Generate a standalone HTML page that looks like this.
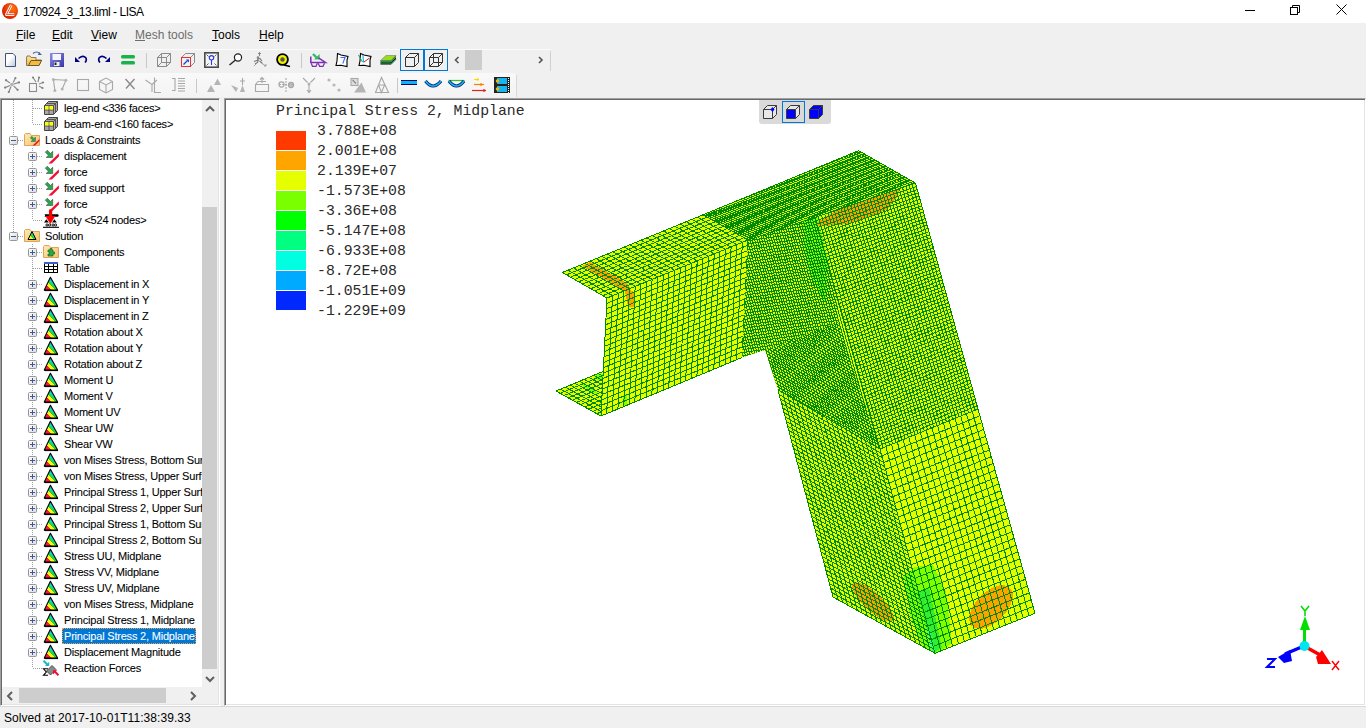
<!DOCTYPE html>
<html><head><meta charset="utf-8">
<style>
*{margin:0;padding:0;box-sizing:border-box}
html,body{width:1366px;height:728px;overflow:hidden;background:#f0f0f0;font-family:"Liberation Sans",sans-serif;color:#000}
.a{position:absolute}
#title{left:0;top:0;width:1366px;height:23px;background:#fff}
#title .t{left:23px;top:5px;font-size:12px;letter-spacing:-0.47px;white-space:nowrap}
#menu{left:0;top:23px;width:1366px;height:24px;background:#f0f0f0}
#menu span{position:absolute;top:5px;font-size:12px;white-space:nowrap;line-height:14px}
#menu u{text-decoration:underline;text-decoration-thickness:1px;text-underline-offset:1px}
#tree{left:0;top:98px;width:220px;height:608px;background:#fff;border-top:1px solid #a0a0a0;border-left:1px solid #a0a0a0;border-right:1px solid #fff;border-bottom:1px solid #fff;box-shadow:inset 1px 1px 0 #696969,inset -1px -1px 0 #e3e3e3}
.row{height:16px;font-size:11px;line-height:16px;white-space:nowrap;letter-spacing:-0.2px;-webkit-text-stroke:0.08px currentColor}
.sel{background:#0078d7;outline:1px dotted #ff9b2a;outline-offset:-1px}
.dv{position:absolute;width:1px;background:repeating-linear-gradient(to bottom,#a0a0a0 0 1px,transparent 1px 2px)}
.dh{position:absolute;height:1px;background:repeating-linear-gradient(to right,#a0a0a0 0 1px,transparent 1px 2px)}
#view{left:224px;top:98px;width:1142px;height:608px;background:#fff;border-top:1px solid #a0a0a0;border-left:1px solid #a0a0a0;border-right:1px solid #fff;border-bottom:1px solid #fff;box-shadow:inset 1px 1px 0 #696969,inset -1px -1px 0 #e3e3e3}
#status{left:0;top:706px;width:1366px;height:22px;background:#f0f0f0;border-top:1px solid #d9d9d9}
#status .t{left:4px;top:4px;font-size:12px;white-space:nowrap;letter-spacing:0.07px}
.leg{position:absolute;font-family:"Liberation Mono",monospace;font-size:14.8px;white-space:pre;line-height:16px;color:#2a2a2a}
.sb{position:absolute;background:#f0f0f0}
.th{position:absolute;background:#cdcdcd}
</style></head><body>
<svg width="0" height="0" style="position:absolute">
<defs>
<linearGradient id="gexp" x1="0" y1="0" x2="1" y2="1"><stop offset="0" stop-color="#fff"/><stop offset="1" stop-color="#d8d8d8"/></linearGradient>
<linearGradient id="gfold" x1="0" y1="0" x2="1" y2="1"><stop offset="0" stop-color="#fce9b4"/><stop offset="1" stop-color="#f5c36b"/></linearGradient>
<linearGradient id="grain" gradientUnits="userSpaceOnUse" x1="0" y1="16" x2="16" y2="0"><stop offset=".32" stop-color="#ee1a44"/><stop offset=".32" stop-color="#ffee00"/><stop offset=".46" stop-color="#ffff00"/><stop offset=".46" stop-color="#22cc44"/><stop offset=".54" stop-color="#22dd44"/><stop offset=".54" stop-color="#11ccdd"/></linearGradient>
<symbol id="expp" viewBox="0 0 9 9"><rect x=".5" y=".5" width="8" height="8" rx="1" fill="url(#gexp)" stroke="#969696"/><path d="M2 4.5H7M4.5 2V7" stroke="#3c5aa0"/></symbol>
<symbol id="expm" viewBox="0 0 9 9"><rect x=".5" y=".5" width="8" height="8" rx="1" fill="url(#gexp)" stroke="#969696"/><path d="M2 4.5H7" stroke="#3c5aa0"/></symbol>
<symbol id="icube" viewBox="0 0 16 16"><path d="M1.5 5.5L5.5 1.5H14.5V10.5L10.5 14.5H1.5Z" fill="#a8a8a8" stroke="#444"/><path d="M1.5 5.5H10.5V14.5M10.5 5.5L14.5 1.5M6 5.5V14.5M1.5 10H10.5M3.5 3.5H12.5M12.5 3.5V12.5" stroke="#555" fill="none"/><rect x="2" y="6" width="3.5" height="3.5" fill="#ffff00"/><rect x="6.5" y="6" width="3.5" height="3.5" fill="#ffff00"/></symbol>
<symbol id="iload" viewBox="0 0 16 16" overflow="visible"><path d="M2.3 4.2L4.3 2.2L7.5 5.5L9.7 3.3V9.5H3.2L5.5 7.3Z" fill="#1fab45" stroke="#555" stroke-width=".7"/><path d="M5.4 15.6H8.9L15.9 8.6V5.3Z" fill="#ee1133"/></symbol>
<symbol id="ifload" viewBox="0 0 16 16"><path d="M.5 2.5V13.5H15.5V3.5H7.5L6 1.5H1.5Z" fill="url(#gfold)" stroke="#dfa45c"/><path d="M6.3 5.8L7.8 4.3L10 6.5L11.5 5V9.5H7L8.5 8Z" fill="#1fab45" stroke="#555" stroke-width=".5"/><path d="M8.5 13.5H11L15.5 9V7Z" fill="#ee1133"/></symbol>
<symbol id="iroty" viewBox="0 0 16 16" overflow="visible"><path d="M1.5 2.2H15L15.8 3.4L15 4.7H1.5L2.2 3.4Z" fill="#000"/><path d="M3.4 7.2L5.8 10.6H1L3.4 7.2ZM11.4 7.2L13.8 10.6H9L11.4 7.2Z" fill="#000"/><g fill="none" stroke="#000" stroke-width=".9"><circle cx="4" cy="13" r="1.1"/><circle cx="6.6" cy="13" r="1.1"/><circle cx="10" cy="13" r="1.1"/><circle cx="12.6" cy="13" r="1.1"/></g><path d="M0 15.3H16" stroke="#000" stroke-width="1.1"/><path d="M7.6 -2.5V6" stroke="#ff0000" stroke-width="3.2"/><path d="M2.4 4H12.3L7.4 12Z" fill="#ff0000"/></symbol>
<symbol id="ifsol" viewBox="0 0 16 16"><path d="M.5 2.5V13.5H15.5V3.5H7.5L6 1.5H1.5Z" fill="url(#gfold)" stroke="#dfa45c"/><path d="M8 3.5L12 11.5H4Z" fill="url(#grain)" stroke="#000" stroke-width="1"/></symbol>
<symbol id="ifcomp" viewBox="0 0 16 16"><path d="M.5 2.5V13.5H15.5V3.5H7.5L6 1.5H1.5Z" fill="url(#gfold)" stroke="#dfa45c"/><path d="M5 6H7V4.5H9V6H10V8H11.5V10H10V12H5V10H6.5V8H5Z" fill="#2aa845" stroke="#156b24" stroke-width=".7"/></symbol>
<symbol id="itable" viewBox="0 0 16 16"><rect x="1.5" y="2.5" width="13" height="10" fill="#fff" stroke="#000"/><rect x="1" y="2" width="14" height="2" fill="#3a5fcd"/><path d="M1.5 6.5H14.5M1.5 9.5H14.5M5.5 4V12.5M10.5 4V12.5" stroke="#000"/></symbol>
<symbol id="itri" viewBox="0 0 16 16"><path d="M7.4 1.3L14.6 14H1.3Z" fill="url(#grain)" stroke="#000" stroke-width="1.1" stroke-linejoin="round"/><path d="M1.3 14.5H15" stroke="#000" stroke-width="1.2"/></symbol>
<symbol id="ireact" viewBox="0 0 16 16" overflow="visible"><path d="M3.5 11L9 5.5L13 9.5L7.5 15Z" fill="#8a8a8a" stroke="#333" stroke-width=".8" stroke-linejoin="round"/><path d="M0.5 0.8L4.5 4.8" stroke="#18b8c4" stroke-width="2"/><path d="M2 6H6.2V1.8Z" fill="#18b8c4"/><path d="M15.5 15.2L11.5 11.2" stroke="#e8103a" stroke-width="2"/><path d="M10 10.2V14.4L14.2 10.2Z" fill="#e8103a"/><path d="M5 8.8H0.5L3.3 12L0.5 15.3H5" fill="none" stroke="#000" stroke-width="1.1"/></symbol>
</defs></svg>

<div id="title" class="a">
 <svg class="a" style="left:0;top:0" width="22" height="22" viewBox="0 0 22 22"><defs><radialGradient id="glogo" cx=".65" cy=".35" r=".7"><stop offset="0" stop-color="#ff7a10"/><stop offset="1" stop-color="#d81800"/></radialGradient></defs><circle cx="10" cy="11" r="8" fill="url(#glogo)"/><path d="M11.3 5.2L6.3 14.6H14.3" stroke="#fff" stroke-width="2.6" fill="none" stroke-linejoin="round"/><path d="M11.3 5.2L6.3 14.6H14.3" stroke="#e8401a" stroke-width=".9" fill="none"/></svg>
 <div class="a t">170924_3_13.liml - LISA</div>
 <svg class="a" style="left:1244px;top:10px" width="12" height="2"><rect width="10" height="1" x="1" fill="#000"/></svg>
 <svg class="a" style="left:1290px;top:4px" width="12" height="12"><rect x="0.5" y="3.5" width="7" height="7" fill="none" stroke="#000"/><path d="M2.5 3.5V1.5H9.5V8.5H7.5" fill="none" stroke="#000"/></svg>
 <svg class="a" style="left:1336px;top:4px" width="12" height="12"><path d="M0.5 0.5L10.5 10.5M10.5 0.5L0.5 10.5" stroke="#000" stroke-width="1"/></svg>
</div>
<div id="menu" class="a">
 <span style="left:16px"><u>F</u>ile</span>
 <span style="left:52px"><u>E</u>dit</span>
 <span style="left:91px"><u>V</u>iew</span>
 <span style="left:135px;color:#6d6d6d"><u>M</u>esh tools</span>
 <span style="left:212px"><u>T</u>ools</span>
 <span style="left:259px"><u>H</u>elp</span>
</div>
<div class="a" style="left:0;top:49px;width:550px;height:23px;background:#f0f0f0;border-top:1px solid #fbfbfb"></div>
<div class="a" style="left:550px;top:51px;width:1px;height:20px;background:#d0d0d0"></div>
<div class="a" style="left:0;top:73px;width:516px;height:24px;background:linear-gradient(#f9f9f9,#f3f3f3);border-top-right-radius:3px"></div>
<div class="a" style="left:516px;top:75px;width:1px;height:22px;background:#d8d8d8"></div>
<svg class="a" style="left:0;top:46px" width="560" height="52" viewBox="0 46 560 52">
<defs>
<linearGradient id="gdoc" x1="0" y1="0" x2="1" y2="1"><stop offset=".4" stop-color="#fff"/><stop offset="1" stop-color="#b9c6dc"/></linearGradient>
<linearGradient id="gfo" x1="0" y1="0" x2="0" y2="1"><stop offset="0" stop-color="#ffe89a"/><stop offset="1" stop-color="#f1b33a"/></linearGradient>
<linearGradient id="gsave" x1="0" y1="0" x2="1" y2="1"><stop offset="0" stop-color="#8f8fe8"/><stop offset="1" stop-color="#3535a8"/></linearGradient>
</defs>
<!-- new -->
<path d="M5.5 53.5H13L15.5 56V66.5H5.5Z" fill="url(#gdoc)" stroke="#3d5478"/>
<!-- open -->
<path d="M26.5 58V65.5H39L41.5 60H36V57.5H31L30 56H27Z" fill="url(#gfo)" stroke="#8c7a55"/>
<path d="M28.5 65.5L31 60.5H41.5L39 65.5Z" fill="#f7bb3c" stroke="#6d5b30"/>
<path d="M33 53.5Q36.5 50.5 40 53.5" fill="none" stroke="#3b62a8" stroke-width="1.2"/><path d="M39 52L42 55H38Z" fill="#3b62a8"/>
<!-- save -->
<rect x="50" y="53" width="14" height="14" fill="url(#gsave)"/><rect x="52.5" y="54" width="8.5" height="6" fill="#f4f5fb"/><rect x="54" y="62" width="5.5" height="4" fill="#eee"/><rect x="54.5" y="62.5" width="2" height="2.5" fill="#222"/>
<!-- undo -->
<path d="M78.5 58.5Q83 54.5 86 58Q87 60.5 85 62.5" fill="none" stroke="#000080" stroke-width="1.6"/><path d="M75 57V62H80Z" fill="#000080"/>
<!-- redo -->
<path d="M106.5 58.5Q102 54.5 99 58Q98 60.5 100 62.5" fill="none" stroke="#000080" stroke-width="1.6"/><path d="M110 57V62H105Z" fill="#000080"/>
<!-- green bars -->
<rect x="121" y="55" width="14" height="3.4" rx="1.5" fill="#1ab04a"/><rect x="121" y="61" width="14" height="3.4" rx="1.5" fill="#1ab04a"/>
<rect x="146" y="53" width="1" height="15" fill="#c8c8c8"/>
<!-- wire cube -->
<path d="M157.5 57.5L161.5 53.5H170.5V62.5L166.5 66.5H157.5ZM157.5 57.5H166.5V66.5M166.5 57.5L170.5 53.5M161.5 53.5V62.5H170.5M161.5 62.5L157.5 66.5" fill="none" stroke="#8a8a8a"/>
<!-- red cube -->
<path d="M185.5 53.5H194.5V62.5L190.5 66.5M190.5 57.5L194.5 53.5M181.5 57.5L185.5 53.5" fill="none" stroke="#8a8a8a"/><rect x="181.5" y="57.5" width="9" height="9" fill="none" stroke="#e83030"/><path d="M183.5 64.5L187.5 60.5" stroke="#2040d0" stroke-width="1.2"/><path d="M186 59.5H189V62.5Z" fill="#2040d0"/>
<!-- zoom fit -->
<rect x="204.8" y="52.8" width="13.4" height="14.4" fill="#f4f4f4" stroke="#4a4a4a" stroke-width="1.6"/><path d="M206.5 54.5L208.5 56.5M216.5 54.5L214.5 56.5M206.5 65.5L208.5 63.5M216.5 65.5L214.5 63.5" stroke="#666" stroke-width="1"/><circle cx="211.5" cy="57.8" r="2.2" fill="none" stroke="#2a3ae8" stroke-width="1.1"/><path d="M211.5 60V65" stroke="#2a3ae8" stroke-width="1.1"/>
<!-- magnifier -->
<circle cx="238" cy="57.5" r="3.6" fill="#fff" stroke="#222" stroke-width="1.2"/><path d="M235.5 60L229.5 65" stroke="#222" stroke-width="1.4"/>
<!-- figure -->
<path d="M259.5 52.5V56M258 54L259.5 52.5L261 54" fill="none" stroke="#777" stroke-width=".9"/><circle cx="258" cy="57.5" r="1.3" fill="#888"/><path d="M257 59L260 58.5L262 61M258.5 59.5L257.5 62.5L255 64M259.5 61L262.5 63.5M254 61.5L258 60" fill="none" stroke="#777" stroke-width="1.1"/><path d="M254 66L257 63M262 63.5L266 66M264 66H266V64" fill="none" stroke="#999" stroke-width=".9"/>
<!-- tape -->
<circle cx="282.5" cy="59.5" r="6.3" fill="#000"/><circle cx="282.5" cy="59.5" r="4.5" fill="#f0f000"/><circle cx="282.5" cy="59.5" r="2.2" fill="#555"/><path d="M284 65L290 66.5" stroke="#000" stroke-width="1.6"/>
<rect x="301" y="53" width="1" height="15" fill="#c8c8c8"/>
<!-- glasses -->
<path d="M313 54L317 58" stroke="#3cb86a" stroke-width="2.4"/><path d="M314 59.6H319.6V54Z" fill="#3cb86a"/>
<path d="M310.8 56.5V62.5H325.5L318.5 57.8" fill="none" stroke="#7a30b0" stroke-width="1.5"/><path d="M311.2 63.3L312.5 66.3H316L317.4 63.3M318.2 63.3L319.6 66.3H323L324.5 63.3" fill="none" stroke="#7a30b0" stroke-width="1.2"/>
<!-- doc ? -->
<path d="M337.5 53.5L341 55L348 56.5L347 60L347 66.5L341 65.2L336 65.5L337 61Z" fill="#fff" stroke="#000" stroke-width="1.1"/><path d="M340.5 57.5H345L342.8 63.5" fill="none" stroke="#3a6cff" stroke-width="1.1"/>
<!-- doc axes -->
<path d="M360.5 53.5L364 55L371 56.5L370 60L370 66.5L364 65.2L359 65.5L360 61Z" fill="#fff" stroke="#000" stroke-width="1.1"/><path d="M358.5 55L362.5 62" stroke="#20a040" stroke-width="1"/><path d="M363 55L363.5 62.5" stroke="#10b0e0" stroke-width="1.1"/><path d="M364 62L369.5 58" stroke="#e02020" stroke-width="1"/>
<!-- green slab -->
<path d="M380.5 60.5L386 55.5H396L391 60.5Z" fill="#9ade18" stroke="#777" stroke-width=".6"/><path d="M380.5 60.5H391V64.5H380.5Z" fill="#1f9e3e"/><path d="M391 60.5L396 55.5V59.5L391 64.5Z" fill="#1f9e3e"/><path d="M380.5 61H391L396 56M380.5 64.5H391L396 59.5" fill="none" stroke="#666" stroke-width=".8"/><path d="M380.5 63H391L396 58" fill="none" stroke="#111" stroke-width=".8"/>
<!-- boxed cube buttons -->
<rect x="400.5" y="49.5" width="23" height="21" fill="none" stroke="#0078d7"/>
<path d="M405.5 57.5L409.5 53.5H418.5V62.5L414.5 66.5H405.5ZM405.5 57.5H414.5V66.5M414.5 57.5L418.5 53.5" fill="none" stroke="#333"/>
<rect x="424.5" y="49.5" width="23" height="21" fill="none" stroke="#0078d7"/>
<path d="M429.5 57.5L433.5 53.5H442.5V62.5L438.5 66.5H429.5ZM429.5 57.5H438.5V66.5M438.5 57.5L442.5 53.5M433.5 53.5V62.5H442.5M433.5 62.5L429.5 66.5" fill="none" stroke="#333"/>
<path d="M458.5 57L455.5 60L458.5 63" fill="none" stroke="#555" stroke-width="1.6"/>
<rect x="465" y="50" width="17" height="20" fill="#cdcdcd"/>
<path d="M539 57L542 60L539 63" fill="none" stroke="#555" stroke-width="1.6"/>
<!-- toolbar 2 (disabled gray icons) -->
<g stroke="#a8a8a8" fill="none" stroke-width="1.1">
<circle cx="12" cy="84.5" r="1.8" fill="#b0b0b0" stroke="none"/><path d="M6 80.2L10 83M15.4 78L13.2 82.5M19 82.4L14 84M5.1 87.6L10 85.5M8.8 92L11 86.5M17.6 89.8L13.8 86" stroke="#8c8c8c" stroke-width="1.2"/><g fill="#808080" stroke="none"><circle cx="6" cy="80.2" r="1.1"/><circle cx="15.4" cy="78" r="1.1"/><circle cx="19" cy="82.4" r="1.1"/><circle cx="5.1" cy="87.6" r="1.1"/><circle cx="8.8" cy="92" r="1.1"/><circle cx="17.6" cy="89.8" r="1.1"/></g>
<rect x="29.5" y="83.5" width="7" height="8" stroke="#8c8c8c"/><path d="M33 77.5L36 82M39 77.5L38 82M43 82.5L39 84M42.5 88L39 86" stroke="#8c8c8c" stroke-width="1.2"/><g fill="#808080" stroke="none"><circle cx="33" cy="77.5" r="1.1"/><circle cx="39" cy="77.5" r="1.1"/><circle cx="43" cy="82.5" r="1.1"/><circle cx="42.5" cy="88" r="1.1"/></g>
<path d="M54.9 90.5L53.4 79.5L65.9 80.2L62.2 89"/><g fill="#b4b4b4" stroke="none"><circle cx="53.4" cy="79.5" r="1.5"/><circle cx="65.9" cy="80.2" r="1.5"/><circle cx="54.9" cy="90.5" r="1.5"/><circle cx="62.2" cy="89" r="1.5"/></g>
<rect x="77.5" y="79.5" width="11" height="11"/>
<path d="M99.5 81.5L106 78L112.5 81.5V89.5L106 93L99.5 89.5ZM99.5 81.5L106 85L112.5 81.5M106 85V93"/>
<path d="M125.5 79L134.5 89M134.5 79L126 88.5" stroke="#8a8a8a" stroke-width="1.4"/>
<path d="M145.5 80L152 84.5V92M152 84.5L157 80M154.5 77.5V92.5H161" />
<path d="M172 78.5H175V90.5H172M178 78.5H185M178 81H185M178 83.5H185M178 86H185M178 88.5H185M178 91H185"/>
<rect x="196" y="79" width="1" height="14" fill="#c8c8c8" stroke="none"/>
<path d="M207 92L211 85L215 92ZM214 85L217.5 78.5L221 85Z" fill="#b4b4b4" stroke="none"/>
<path d="M231 85L238 88L236 92ZM240 92L242.5 85L245 92Z" fill="#b4b4b4" stroke="none"/><path d="M242.5 78V85M240 81H245"/>
<path d="M255.5 84.5H268.5V91.5H255.5ZM255.5 84.5L258 81.5H266M262 83V77.5M260 79.5L262 77.5L264 79.5"/>
<circle cx="281.5" cy="84.5" r="2.6"/><circle cx="291" cy="85" r="2.6" fill="#c0c0c0"/><path d="M279 84.5H294M286 78V93" stroke-dasharray="2 1"/>
<path d="M303 78L307.5 82.5M315 78L310.5 82.5M309 84V92M307 90L309 92.5L311 90"/><circle cx="309" cy="84" r="1.5" fill="#b0b0b0" stroke="none"/>
<circle cx="329" cy="80" r="1.6" fill="#b8b8b8" stroke="none"/><circle cx="334" cy="85" r="1.6" fill="#b8b8b8" stroke="none"/><circle cx="339" cy="90" r="1.6" fill="#b8b8b8" stroke="none"/>
<rect x="351" y="78.5" width="7" height="7" fill="#ddd"/><path d="M352.5 80L356 83.5" stroke="#888"/><path d="M354 92.5L361.5 82.5L366 92.5Z" fill="#b4b4b4" stroke="none"/>
<path d="M381.5 77.5L375.5 92.5H388.5ZM378.5 85H384.5M378.5 85L381.5 92.5L384.5 85"/>
</g>
<rect x="397" y="78" width="1" height="15" fill="#c8c8c8"/>
<rect x="401" y="80" width="16" height="5" fill="#0a0a50"/><rect x="401" y="81" width="16" height="3" fill="#10b0ff"/>
<path d="M425.5 81Q433 91 441 81" fill="none" stroke="#0a1a60" stroke-width="3.2"/><path d="M425.5 81Q433 91 441 81" fill="none" stroke="#10b8ff" stroke-width="1.6"/>
<path d="M448.5 80.5H464.5" stroke="#30c030" stroke-width="1.2"/><path d="M449 81Q456.5 91 464 81" fill="none" stroke="#0a1a60" stroke-width="3.2"/><path d="M449 81Q456.5 91 464 81" fill="none" stroke="#10b8ff" stroke-width="1.6"/>
<path d="M474 79.5H479M474 84.5H484M472 90.5H486" stroke-width="1.2" stroke="#ffd800"/><path d="M474 84.5H484" stroke="#ff8000" stroke-width="1.2"/><path d="M472 90.5H486" stroke="#e82020" stroke-width="1.2"/><circle cx="477.5" cy="79.5" r="1.3" fill="#ffd800"/><circle cx="481" cy="84.5" r="1.3" fill="#ff8000"/><circle cx="484" cy="90.5" r="1.3" fill="#e82020"/>
<rect x="494" y="77" width="16" height="16" fill="#222"/><rect x="497" y="78" width="10" height="6" fill="#18b4f0"/><rect x="497" y="86" width="10" height="6" fill="#18b4f0"/><circle cx="497.5" cy="81" r="1.8" fill="#f7b400"/><circle cx="497.5" cy="89" r="1.8" fill="#f7b400"/>
<path d="M508.5 78V93" stroke="#fff" stroke-width="1" stroke-dasharray="1 1"/>
</svg>

<div id="tree" class="a"></div>
<div class="dv" style="left:13px;top:100px;height:40px"></div>
<div class="dv" style="left:13px;top:145px;height:91px"></div>
<div class="dv" style="left:32px;top:100px;height:24px"></div>
<div class="dv" style="left:32px;top:148px;height:72px"></div>
<div class="dv" style="left:32px;top:244px;height:424px"></div>
<div class="dh" style="left:33px;top:108px;width:10px"></div>
<svg class="a" style="left:43px;top:100px;overflow:visible" width="16" height="16"><use href="#icube"/></svg>
<div class="a row" style="left:64px;top:100px">leg-end &lt;336 faces&gt;</div>
<div class="dh" style="left:33px;top:124px;width:10px"></div>
<svg class="a" style="left:43px;top:116px;overflow:visible" width="16" height="16"><use href="#icube"/></svg>
<div class="a row" style="left:64px;top:116px">beam-end &lt;160 faces&gt;</div>
<svg class="a" style="left:9px;top:136px" width="9" height="9"><use href="#expm"/></svg>
<div class="dh" style="left:18px;top:140px;width:6px"></div>
<svg class="a" style="left:24px;top:132px;overflow:visible" width="16" height="16"><use href="#ifload"/></svg>
<div class="a row" style="left:45px;top:132px">Loads &amp; Constraints</div>
<svg class="a" style="left:28px;top:152px" width="9" height="9"><use href="#expp"/></svg>
<div class="dh" style="left:37px;top:156px;width:5px"></div>
<svg class="a" style="left:43px;top:148px;overflow:visible" width="16" height="16"><use href="#iload"/></svg>
<div class="a row" style="left:64px;top:148px">displacement</div>
<svg class="a" style="left:28px;top:168px" width="9" height="9"><use href="#expp"/></svg>
<div class="dh" style="left:37px;top:172px;width:5px"></div>
<svg class="a" style="left:43px;top:164px;overflow:visible" width="16" height="16"><use href="#iload"/></svg>
<div class="a row" style="left:64px;top:164px">force</div>
<svg class="a" style="left:28px;top:184px" width="9" height="9"><use href="#expp"/></svg>
<div class="dh" style="left:37px;top:188px;width:5px"></div>
<svg class="a" style="left:43px;top:180px;overflow:visible" width="16" height="16"><use href="#iload"/></svg>
<div class="a row" style="left:64px;top:180px">fixed support</div>
<svg class="a" style="left:28px;top:200px" width="9" height="9"><use href="#expp"/></svg>
<div class="dh" style="left:37px;top:204px;width:5px"></div>
<svg class="a" style="left:43px;top:196px;overflow:visible" width="16" height="16"><use href="#iload"/></svg>
<div class="a row" style="left:64px;top:196px">force</div>
<div class="dh" style="left:33px;top:220px;width:10px"></div>
<svg class="a" style="left:43px;top:212px;overflow:visible" width="16" height="16"><use href="#iroty"/></svg>
<div class="a row" style="left:64px;top:212px">roty &lt;524 nodes&gt;</div>
<svg class="a" style="left:9px;top:232px" width="9" height="9"><use href="#expm"/></svg>
<div class="dh" style="left:18px;top:236px;width:6px"></div>
<svg class="a" style="left:24px;top:228px;overflow:visible" width="16" height="16"><use href="#ifsol"/></svg>
<div class="a row" style="left:45px;top:228px">Solution</div>
<svg class="a" style="left:28px;top:248px" width="9" height="9"><use href="#expp"/></svg>
<div class="dh" style="left:37px;top:252px;width:5px"></div>
<svg class="a" style="left:43px;top:244px;overflow:visible" width="16" height="16"><use href="#ifcomp"/></svg>
<div class="a row" style="left:64px;top:244px">Components</div>
<div class="dh" style="left:33px;top:268px;width:10px"></div>
<svg class="a" style="left:43px;top:260px;overflow:visible" width="16" height="16"><use href="#itable"/></svg>
<div class="a row" style="left:64px;top:260px">Table</div>
<svg class="a" style="left:28px;top:280px" width="9" height="9"><use href="#expp"/></svg>
<div class="dh" style="left:37px;top:284px;width:5px"></div>
<svg class="a" style="left:43px;top:276px;overflow:visible" width="16" height="16"><use href="#itri"/></svg>
<div class="a row" style="left:64px;top:276px">Displacement in X</div>
<svg class="a" style="left:28px;top:296px" width="9" height="9"><use href="#expp"/></svg>
<div class="dh" style="left:37px;top:300px;width:5px"></div>
<svg class="a" style="left:43px;top:292px;overflow:visible" width="16" height="16"><use href="#itri"/></svg>
<div class="a row" style="left:64px;top:292px">Displacement in Y</div>
<svg class="a" style="left:28px;top:312px" width="9" height="9"><use href="#expp"/></svg>
<div class="dh" style="left:37px;top:316px;width:5px"></div>
<svg class="a" style="left:43px;top:308px;overflow:visible" width="16" height="16"><use href="#itri"/></svg>
<div class="a row" style="left:64px;top:308px">Displacement in Z</div>
<svg class="a" style="left:28px;top:328px" width="9" height="9"><use href="#expp"/></svg>
<div class="dh" style="left:37px;top:332px;width:5px"></div>
<svg class="a" style="left:43px;top:324px;overflow:visible" width="16" height="16"><use href="#itri"/></svg>
<div class="a row" style="left:64px;top:324px">Rotation about X</div>
<svg class="a" style="left:28px;top:344px" width="9" height="9"><use href="#expp"/></svg>
<div class="dh" style="left:37px;top:348px;width:5px"></div>
<svg class="a" style="left:43px;top:340px;overflow:visible" width="16" height="16"><use href="#itri"/></svg>
<div class="a row" style="left:64px;top:340px">Rotation about Y</div>
<svg class="a" style="left:28px;top:360px" width="9" height="9"><use href="#expp"/></svg>
<div class="dh" style="left:37px;top:364px;width:5px"></div>
<svg class="a" style="left:43px;top:356px;overflow:visible" width="16" height="16"><use href="#itri"/></svg>
<div class="a row" style="left:64px;top:356px">Rotation about Z</div>
<svg class="a" style="left:28px;top:376px" width="9" height="9"><use href="#expp"/></svg>
<div class="dh" style="left:37px;top:380px;width:5px"></div>
<svg class="a" style="left:43px;top:372px;overflow:visible" width="16" height="16"><use href="#itri"/></svg>
<div class="a row" style="left:64px;top:372px">Moment U</div>
<svg class="a" style="left:28px;top:392px" width="9" height="9"><use href="#expp"/></svg>
<div class="dh" style="left:37px;top:396px;width:5px"></div>
<svg class="a" style="left:43px;top:388px;overflow:visible" width="16" height="16"><use href="#itri"/></svg>
<div class="a row" style="left:64px;top:388px">Moment V</div>
<svg class="a" style="left:28px;top:408px" width="9" height="9"><use href="#expp"/></svg>
<div class="dh" style="left:37px;top:412px;width:5px"></div>
<svg class="a" style="left:43px;top:404px;overflow:visible" width="16" height="16"><use href="#itri"/></svg>
<div class="a row" style="left:64px;top:404px">Moment UV</div>
<svg class="a" style="left:28px;top:424px" width="9" height="9"><use href="#expp"/></svg>
<div class="dh" style="left:37px;top:428px;width:5px"></div>
<svg class="a" style="left:43px;top:420px;overflow:visible" width="16" height="16"><use href="#itri"/></svg>
<div class="a row" style="left:64px;top:420px">Shear UW</div>
<svg class="a" style="left:28px;top:440px" width="9" height="9"><use href="#expp"/></svg>
<div class="dh" style="left:37px;top:444px;width:5px"></div>
<svg class="a" style="left:43px;top:436px;overflow:visible" width="16" height="16"><use href="#itri"/></svg>
<div class="a row" style="left:64px;top:436px">Shear VW</div>
<svg class="a" style="left:28px;top:456px" width="9" height="9"><use href="#expp"/></svg>
<div class="dh" style="left:37px;top:460px;width:5px"></div>
<svg class="a" style="left:43px;top:452px;overflow:visible" width="16" height="16"><use href="#itri"/></svg>
<div class="a row" style="left:64px;top:452px">von Mises Stress, Bottom Sur</div>
<svg class="a" style="left:28px;top:472px" width="9" height="9"><use href="#expp"/></svg>
<div class="dh" style="left:37px;top:476px;width:5px"></div>
<svg class="a" style="left:43px;top:468px;overflow:visible" width="16" height="16"><use href="#itri"/></svg>
<div class="a row" style="left:64px;top:468px">von Mises Stress, Upper Surf</div>
<svg class="a" style="left:28px;top:488px" width="9" height="9"><use href="#expp"/></svg>
<div class="dh" style="left:37px;top:492px;width:5px"></div>
<svg class="a" style="left:43px;top:484px;overflow:visible" width="16" height="16"><use href="#itri"/></svg>
<div class="a row" style="left:64px;top:484px">Principal Stress 1, Upper Surf</div>
<svg class="a" style="left:28px;top:504px" width="9" height="9"><use href="#expp"/></svg>
<div class="dh" style="left:37px;top:508px;width:5px"></div>
<svg class="a" style="left:43px;top:500px;overflow:visible" width="16" height="16"><use href="#itri"/></svg>
<div class="a row" style="left:64px;top:500px">Principal Stress 2, Upper Surf</div>
<svg class="a" style="left:28px;top:520px" width="9" height="9"><use href="#expp"/></svg>
<div class="dh" style="left:37px;top:524px;width:5px"></div>
<svg class="a" style="left:43px;top:516px;overflow:visible" width="16" height="16"><use href="#itri"/></svg>
<div class="a row" style="left:64px;top:516px">Principal Stress 1, Bottom Sur</div>
<svg class="a" style="left:28px;top:536px" width="9" height="9"><use href="#expp"/></svg>
<div class="dh" style="left:37px;top:540px;width:5px"></div>
<svg class="a" style="left:43px;top:532px;overflow:visible" width="16" height="16"><use href="#itri"/></svg>
<div class="a row" style="left:64px;top:532px">Principal Stress 2, Bottom Sur</div>
<svg class="a" style="left:28px;top:552px" width="9" height="9"><use href="#expp"/></svg>
<div class="dh" style="left:37px;top:556px;width:5px"></div>
<svg class="a" style="left:43px;top:548px;overflow:visible" width="16" height="16"><use href="#itri"/></svg>
<div class="a row" style="left:64px;top:548px">Stress UU, Midplane</div>
<svg class="a" style="left:28px;top:568px" width="9" height="9"><use href="#expp"/></svg>
<div class="dh" style="left:37px;top:572px;width:5px"></div>
<svg class="a" style="left:43px;top:564px;overflow:visible" width="16" height="16"><use href="#itri"/></svg>
<div class="a row" style="left:64px;top:564px">Stress VV, Midplane</div>
<svg class="a" style="left:28px;top:584px" width="9" height="9"><use href="#expp"/></svg>
<div class="dh" style="left:37px;top:588px;width:5px"></div>
<svg class="a" style="left:43px;top:580px;overflow:visible" width="16" height="16"><use href="#itri"/></svg>
<div class="a row" style="left:64px;top:580px">Stress UV, Midplane</div>
<svg class="a" style="left:28px;top:600px" width="9" height="9"><use href="#expp"/></svg>
<div class="dh" style="left:37px;top:604px;width:5px"></div>
<svg class="a" style="left:43px;top:596px;overflow:visible" width="16" height="16"><use href="#itri"/></svg>
<div class="a row" style="left:64px;top:596px">von Mises Stress, Midplane</div>
<svg class="a" style="left:28px;top:616px" width="9" height="9"><use href="#expp"/></svg>
<div class="dh" style="left:37px;top:620px;width:5px"></div>
<svg class="a" style="left:43px;top:612px;overflow:visible" width="16" height="16"><use href="#itri"/></svg>
<div class="a row" style="left:64px;top:612px">Principal Stress 1, Midplane</div>
<svg class="a" style="left:28px;top:632px" width="9" height="9"><use href="#expp"/></svg>
<div class="dh" style="left:37px;top:636px;width:5px"></div>
<svg class="a" style="left:43px;top:628px;overflow:visible" width="16" height="16"><use href="#itri"/></svg>
<div class="a sel" style="left:62px;top:628px;width:134px;height:16px"></div>
<div class="a row" style="left:64px;top:628px;color:#fff">Principal Stress 2, Midplane</div>
<svg class="a" style="left:28px;top:648px" width="9" height="9"><use href="#expp"/></svg>
<div class="dh" style="left:37px;top:652px;width:5px"></div>
<svg class="a" style="left:43px;top:644px;overflow:visible" width="16" height="16"><use href="#itri"/></svg>
<div class="a row" style="left:64px;top:644px">Displacement Magnitude</div>
<div class="dh" style="left:33px;top:668px;width:10px"></div>
<svg class="a" style="left:43px;top:660px;overflow:visible" width="16" height="16"><use href="#ireact"/></svg>
<div class="a row" style="left:64px;top:660px">Reaction Forces</div>

<div class="sb" style="left:202px;top:100px;width:16px;height:587px"></div>
<div class="th" style="left:202px;top:207px;width:15px;height:462px"></div>
<svg class="a" style="left:205px;top:105px" width="10" height="8"><path d="M1 6L5 2L9 6" fill="none" stroke="#606060" stroke-width="2"/></svg>
<svg class="a" style="left:205px;top:675px" width="10" height="8"><path d="M1 2L5 6L9 2" fill="none" stroke="#606060" stroke-width="2"/></svg>
<div class="sb" style="left:2px;top:687px;width:216px;height:17px"></div>
<div class="th" style="left:19px;top:688px;width:147px;height:15px"></div>
<svg class="a" style="left:6px;top:691px" width="8" height="10"><path d="M6 1L2 5L6 9" fill="none" stroke="#606060" stroke-width="2"/></svg>
<svg class="a" style="left:189px;top:691px" width="8" height="10"><path d="M2 1L6 5L2 9" fill="none" stroke="#606060" stroke-width="2"/></svg>
<div id="view" class="a"></div>
<div class="leg" style="left:276px;top:103px">Principal Stress 2, Midplane</div>
<div class="a" style="left:276px;top:131px;width:30px;height:19px;background:#ff3a00"></div>
<div class="a" style="left:276px;top:151px;width:30px;height:19px;background:#ffa500"></div>
<div class="a" style="left:276px;top:171px;width:30px;height:19px;background:#e6ff00"></div>
<div class="a" style="left:276px;top:191px;width:30px;height:19px;background:#7aff00"></div>
<div class="a" style="left:276px;top:211px;width:30px;height:19px;background:#00ff00"></div>
<div class="a" style="left:276px;top:231px;width:30px;height:19px;background:#00ff80"></div>
<div class="a" style="left:276px;top:251px;width:30px;height:19px;background:#00ffe0"></div>
<div class="a" style="left:276px;top:271px;width:30px;height:19px;background:#00aaff"></div>
<div class="a" style="left:276px;top:291px;width:30px;height:19px;background:#0028ff"></div>
<div class="leg" style="left:317px;top:123px">3.788E+08</div>
<div class="leg" style="left:317px;top:143px">2.001E+08</div>
<div class="leg" style="left:317px;top:163px">2.139E+07</div>
<div class="leg" style="left:317px;top:183px">-1.573E+08</div>
<div class="leg" style="left:317px;top:203px">-3.36E+08</div>
<div class="leg" style="left:317px;top:223px">-5.147E+08</div>
<div class="leg" style="left:317px;top:243px">-6.933E+08</div>
<div class="leg" style="left:317px;top:263px">-8.72E+08</div>
<div class="leg" style="left:317px;top:283px">-1.051E+09</div>
<div class="leg" style="left:317px;top:303px">-1.229E+09</div>
<div class="a" style="left:759px;top:100px;width:72px;height:24px;background:#dadada;border-radius:0 0 3px 3px"></div>
<div class="a" style="left:782px;top:101px;width:23px;height:22px;border:1px solid #0078d7"></div>
<svg class="a" style="left:762px;top:104px" width="16" height="16" viewBox="0 0 16 16"><path d="M1.5 5.5L5.5 1.5H14.5V10.5L10.5 14.5H1.5Z" fill="#e8e8e8"/><path d="M1.5 5.5L5.5 1.5H14.5V10.5L10.5 14.5H1.5ZM1.5 5.5H10.5V14.5M10.5 5.5L14.5 1.5" fill="none" stroke="#3a3a3a"/><path d="M10.5 3L12.5 5.5L10.5 8L8.5 5.5Z" fill="#0000ff"/></svg>
<svg class="a" style="left:785px;top:104px" width="16" height="16" viewBox="0 0 16 16"><path d="M1.5 5.5L5.5 1.5H14.5V10.5L10.5 14.5H1.5Z" fill="#e8e8e8"/><path d="M1.5 5.5H10.5V14.5H1.5Z" fill="#0000ff"/><path d="M1.5 5.5L5.5 1.5H14.5V10.5L10.5 14.5H1.5ZM1.5 5.5H10.5V14.5M10.5 5.5L14.5 1.5" fill="none" stroke="#3a3a3a"/></svg>
<svg class="a" style="left:808px;top:104px" width="16" height="16" viewBox="0 0 16 16"><path d="M1.5 5.5L5.5 1.5H14.5V10.5L10.5 14.5H1.5Z" fill="#e8e8e8"/><path d="M1.5 5.5H10.5V14.5H1.5Z" fill="#0000ff"/><path d="M10.5 5.5L14.5 1.5V10.5L10.5 14.5ZM1.5 5.5L5.5 1.5H14.5L10.5 5.5Z" fill="#0000ff"/><path d="M1.5 5.5L5.5 1.5H14.5V10.5L10.5 14.5H1.5ZM1.5 5.5H10.5V14.5M10.5 5.5L14.5 1.5" fill="none" stroke="#3a3a3a"/></svg>
<svg class="a" style="left:1260px;top:600px" width="90" height="75" viewBox="1260 600 90 75">
<path d="M1304.5 646V625" stroke="#00e000" stroke-width="3"/><path d="M1300 630L1305 616L1310 630Z" fill="#00e000"/>
<path d="M1304 646L1322 656" stroke="#ff0000" stroke-width="3.5"/><path d="M1316 657L1322 650L1331 664L1318 664Z" fill="#ff0000"/>
<path d="M1304 646L1285 654" stroke="#0000ff" stroke-width="3.5"/><path d="M1290 650L1278 657L1284 663L1292 661Z" fill="#0000ff"/>
<circle cx="1304.5" cy="646" r="5" fill="#00e5ee"/>
<path d="M1301 606L1305 611L1309 606M1305 611V616" stroke="#00e000" stroke-width="1.6" fill="none"/>
<path d="M1332 661L1339 670M1339 661L1332 670" stroke="#ff0000" stroke-width="1.4" fill="none"/>
<path d="M1267 659H1275L1267 667H1275" stroke="#0000ff" stroke-width="2" fill="none"/>
</svg>
<svg class="a" style="left:0;top:0" width="1366" height="728" shape-rendering="crispEdges"><defs>
<clipPath id="cF5"><path d="M748 240L815 217.5L880 449L778 390L765 350L742 357.5Z"/></clipPath>
</defs>
<path d="M556 391L601 416L648 396.5L603 371.5Z" fill="#e6ff00" />
<clipPath id="fc1"><path d="M556 391L601 416L648 396.5L603 371.5Z"/></clipPath>
<g clip-path="url(#fc1)">
<ellipse cx="600" cy="377" rx="5" ry="3" fill="#80ff00"/>
<ellipse cx="590" cy="389" rx="9" ry="1.6" transform="rotate(30 590 389)" fill="#80ff00"/>
</g>
<path d="M556 391L603 371.5M560.1 393.3L607.1 373.8M564.2 395.5L611.2 376M568.3 397.8L615.3 378.3M572.4 400.1L619.4 380.6M576.5 402.4L623.5 382.9M580.5 404.6L627.5 385.1M584.6 406.9L631.6 387.4M588.7 409.2L635.7 389.7M592.8 411.5L639.8 392M596.9 413.7L643.9 394.2M601 416L648 396.5M556 391L601 416M560.7 389.1L605.7 414.1M565.4 387.1L610.4 412.1M570.1 385.1L615.1 410.1M574.8 383.2L619.8 408.2M579.5 381.2L624.5 406.2M584.2 379.3L629.2 404.3M588.9 377.4L633.9 402.3M593.6 375.4L638.6 400.4M598.3 373.5L643.3 398.5M603 371.5L648 396.5" stroke="#008a00" stroke-width="1" fill="none"/>
<path d="M607 298L601 416L742 357.5L748 240Z" fill="#e6ff00" />
<clipPath id="fc2"><path d="M607 298L601 416L742 357.5L748 240Z"/></clipPath>
<g clip-path="url(#fc2)">
<path d="M624 286L634 292L634 307L628 307L626 296Z" fill="#ffa200"/>
<ellipse cx="625" cy="400" rx="2.5" ry="6" fill="#80ff00"/>
</g>
<path d="M607 298L748 240M606.7 303.4L747.7 245.3M606.5 308.7L747.5 250.7M606.2 314.1L747.2 256M605.9 319.5L746.9 261.4M605.6 324.8L746.6 266.7M605.4 330.2L746.4 272M605.1 335.5L746.1 277.4M604.8 340.9L745.8 282.7M604.5 346.3L745.5 288.1M604.3 351.6L745.3 293.4M604 357L745 298.8M603.7 362.4L744.7 304.1M603.5 367.7L744.5 309.4M603.2 373.1L744.2 314.8M602.9 378.5L743.9 320.1M602.6 383.8L743.6 325.5M602.4 389.2L743.4 330.8M602.1 394.5L743.1 336.1M601.8 399.9L742.8 341.5M601.5 405.3L742.5 346.8M601.3 410.6L742.3 352.2M601 416L742 357.5M607 298L601 416M612.6 295.7L606.6 413.7M618.3 293.4L612.3 411.3M623.9 291L617.9 409M629.6 288.7L623.6 406.6M635.2 286.4L629.2 404.3M640.8 284.1L634.8 402M646.5 281.8L640.5 399.6M652.1 279.4L646.1 397.3M657.8 277.1L651.8 394.9M663.4 274.8L657.4 392.6M669 272.5L663 390.3M674.7 270.2L668.7 387.9M680.3 267.8L674.3 385.6M686 265.5L680 383.2M691.6 263.2L685.6 380.9M697.2 260.9L691.2 378.6M702.9 258.6L696.9 376.2M708.5 256.2L702.5 373.9M714.2 253.9L708.2 371.5M719.8 251.6L713.8 369.2M725.4 249.3L719.4 366.9M731.1 247L725.1 364.5M736.7 244.6L730.7 362.2M742.4 242.3L736.4 359.8M748 240L742 357.5" stroke="#008a00" stroke-width="1" fill="none"/>
<path d="M562.4 272.5L607 298L748 240L703 214.8Z" fill="#e6ff00" />
<clipPath id="fc3"><path d="M562.4 272.5L607 298L748 240L703 214.8Z"/></clipPath>
<g clip-path="url(#fc3)">
<path d="M582 266L590 262L627 283L634 293L634 307L628 307L626 295L618 287Z" fill="#ffa200"/>
</g>
<path d="M562.4 272.5L703 214.8M566.5 274.8L707.1 217.1M570.5 277.1L711.2 219.4M574.6 279.5L715.3 221.7M578.6 281.8L719.4 224M582.7 284.1L723.5 226.3M586.7 286.4L727.5 228.5M590.8 288.7L731.6 230.8M594.8 291L735.7 233.1M598.9 293.4L739.8 235.4M602.9 295.7L743.9 237.7M607 298L748 240M562.4 272.5L607 298M568 270.2L612.6 295.7M573.6 267.9L618.3 293.4M579.3 265.6L623.9 291M584.9 263.3L629.6 288.7M590.5 261L635.2 286.4M596.1 258.7L640.8 284.1M601.8 256.3L646.5 281.8M607.4 254L652.1 279.4M613 251.7L657.8 277.1M618.6 249.4L663.4 274.8M624.3 247.1L669 272.5M629.9 244.8L674.7 270.2M635.5 242.5L680.3 267.8M641.1 240.2L686 265.5M646.8 237.9L691.6 263.2M652.4 235.6L697.2 260.9M658 233.3L702.9 258.6M663.6 231L708.5 256.2M669.3 228.6L714.2 253.9M674.9 226.3L719.8 251.6M680.5 224L725.4 249.3M686.1 221.7L731.1 247M691.8 219.4L736.7 244.6M697.4 217.1L742.4 242.3M703 214.8L748 240" stroke="#008a00" stroke-width="1" fill="none"/>
<path d="M703 214.8L748 240L915.5 183.2L858.6 150.7Z" fill="#e6ff00" />
<path d="M703 214.8L858.6 150.7M705.1 216L861.3 152.2M707.3 217.2L864 153.8M709.4 218.4L866.7 155.3M711.6 219.6L869.4 156.9M713.7 220.8L872.1 158.4M715.9 222L874.9 160M718 223.2L877.6 161.5M720.1 224.4L880.3 163.1M722.3 225.6L883 164.6M724.4 226.8L885.7 166.2M726.6 228L888.4 167.7M728.7 229.2L891.1 169.3M730.9 230.4L893.8 170.8M733 231.6L896.5 172.4M735.1 232.8L899.2 173.9M737.3 234L902 175.5M739.4 235.2L904.7 177M741.6 236.4L907.4 178.6M743.7 237.6L910.1 180.1M745.9 238.8L912.8 181.7M748 240L915.5 183.2M703 214.8L748 240M705.5 213.8L750.7 239.1M708 212.7L753.4 238.2M710.5 211.7L756.1 237.3M713 210.7L758.8 236.3M715.5 209.6L761.5 235.4M718.1 208.6L764.2 234.5M720.6 207.6L766.9 233.6M723.1 206.5L769.6 232.7M725.6 205.5L772.3 231.8M728.1 204.5L775 230.8M730.6 203.4L777.7 229.9M733.1 202.4L780.4 229M735.6 201.4L783.1 228.1M738.1 200.3L785.8 227.2M740.6 199.3L788.5 226.3M743.2 198.3L791.2 225.3M745.7 197.2L793.9 224.4M748.2 196.2L796.6 223.5M750.7 195.2L799.3 222.6M753.2 194.1L802 221.7M755.7 193.1L804.7 220.8M758.2 192.1L807.4 219.8M760.7 191L810.1 218.9M763.2 190L812.8 218M765.7 189L815.5 217.1M768.3 187.9L818.2 216.2M770.8 186.9L820.9 215.3M773.3 185.9L823.6 214.3M775.8 184.8L826.3 213.4M778.3 183.8L829 212.5M780.8 182.8L831.8 211.6M783.3 181.7L834.5 210.7M785.8 180.7L837.2 209.8M788.3 179.6L839.9 208.9M790.8 178.6L842.6 207.9M793.3 177.6L845.3 207M795.9 176.5L848 206.1M798.4 175.5L850.7 205.2M800.9 174.5L853.4 204.3M803.4 173.4L856.1 203.4M805.9 172.4L858.8 202.4M808.4 171.4L861.5 201.5M810.9 170.3L864.2 200.6M813.4 169.3L866.9 199.7M815.9 168.3L869.6 198.8M818.4 167.2L872.3 197.9M821 166.2L875 196.9M823.5 165.2L877.7 196M826 164.1L880.4 195.1M828.5 163.1L883.1 194.2M831 162.1L885.8 193.3M833.5 161L888.5 192.4M836 160L891.2 191.4M838.5 159L893.9 190.5M841 157.9L896.6 189.6M843.5 156.9L899.3 188.7M846.1 155.9L902 187.8M848.6 154.8L904.7 186.9M851.1 153.8L907.4 185.9M853.6 152.8L910.1 185M856.1 151.7L912.8 184.1M858.6 150.7L915.5 183.2" stroke="#008a00" stroke-width="1" fill="none"/>
<path d="M748 240L815 217.5L880 449L778 390L765 350L742 357.5Z" fill="#e6ff00" />
<path d="M803 219L818 218L828 260L826 305L810 275L804 245Z" fill="#80ff00"/>
<clipPath id="cF5a"><path d="M742 210L830 210L838 322L765 350L742 357.5Z"/></clipPath>
<clipPath id="cF5b"><path d="M765 350L838 322L880 449L778 390Z"/></clipPath>
<path d="M690 210L760 460M692.5 210L762.5 460M694.9 210L764.9 460M697.4 210L767.4 460M699.8 210L769.8 460M702.2 210L772.2 460M704.7 210L774.7 460M707.1 210L777.1 460M709.6 210L779.6 460M712 210L782 460M714.5 210L784.5 460M717 210L787 460M719.4 210L789.4 460M721.9 210L791.9 460M724.3 210L794.3 460M726.8 210L796.8 460M729.2 210L799.2 460M731.6 210L801.6 460M734.1 210L804.1 460M736.5 210L806.5 460M739 210L809 460M741.5 210L811.5 460M743.9 210L813.9 460M746.4 210L816.4 460M748.8 210L818.8 460M751.2 210L821.2 460M753.7 210L823.7 460M756.1 210L826.1 460M758.6 210L828.6 460M761 210L831 460M763.5 210L833.5 460M766 210L836 460M768.4 210L838.4 460M770.9 210L840.9 460M773.3 210L843.3 460M775.8 210L845.8 460M778.2 210L848.2 460M780.6 210L850.6 460M783.1 210L853.1 460M785.5 210L855.5 460M788 210L858 460M790.5 210L860.5 460M792.9 210L862.9 460M795.4 210L865.4 460M797.8 210L867.8 460M800.2 210L870.2 460M802.7 210L872.7 460M805.1 210L875.1 460M807.6 210L877.6 460M810 210L880 460M812.5 210L882.5 460M815 210L885 460M817.4 210L887.4 460M819.9 210L889.9 460M822.3 210L892.3 460M824.8 210L894.8 460M827.2 210L897.2 460M829.6 210L899.6 460M832.1 210L902.1 460M834.5 210L904.5 460M837 210L907 460M839.5 210L909.5 460M841.9 210L911.9 460M844.4 210L914.4 460M846.8 210L916.8 460M849.2 210L919.2 460M851.7 210L921.7 460M854.1 210L924.1 460M856.6 210L926.6 460M859 210L929 460M861.5 210L931.5 460M864 210L934 460M866.4 210L936.4 460M868.9 210L938.9 460M871.3 210L941.3 460M873.8 210L943.8 460M876.2 210L946.2 460M878.6 210L948.6 460M881.1 210L951.1 460M883.5 210L953.5 460" stroke="#008a00" fill="none" clip-path="url(#cF5)"/>
<g clip-path="url(#cF5)"><path d="M740 215L840 200M740 218L840 203M740 221L840 206M740 224L840 209M740 227L840 212M740 230L840 215M740 233L840 218M740 236L840 221M740 239L840 224M740 242L840 227M740 245L840 230M740 248L840 233M740 251L840 236M740 254L840 239M740 257L840 242M740 260L840 245M740 263L840 248M740 266L840 251M740 269L840 254M740 272L840 257M740 275L840 260M740 278L840 263M740 281L840 266M740 284L840 269M740 287L840 272M740 290L840 275M740 293L840 278M740 296L840 281M740 299L840 284M740 302L840 287M740 305L840 290M740 308L840 293M740 311L840 296M740 314L840 299M740 317L840 302M740 320L840 305M740 323L840 308M740 326L840 311M740 329L840 314M740 332L840 317M740 335L840 320M740 338L840 323M740 341L840 326M740 344L840 329M740 347L840 332M740 350L840 335M740 353L840 338M740 356L840 341M740 359L840 344M740 362L840 347M740 365L840 350M740 368L840 353M740 371L840 356M740 374L840 359M740 377L840 362M740 380L840 365M740 383L840 368M740 386L840 371M740 389L840 374M740 392L840 377" stroke="#008a00" fill="none" clip-path="url(#cF5a)"/></g>
<g clip-path="url(#cF5)"><path d="M740 250L890 332.5M740 252.7L890 335.2M740 255.4L890 337.9M740 258.1L890 340.6M740 260.8L890 343.3M740 263.5L890 346M740 266.2L890 348.7M740 268.9L890 351.4M740 271.6L890 354.1M740 274.3L890 356.8M740 277L890 359.5M740 279.7L890 362.2M740 282.4L890 364.9M740 285.1L890 367.6M740 287.8L890 370.3M740 290.5L890 373M740 293.2L890 375.7M740 295.9L890 378.4M740 298.6L890 381.1M740 301.3L890 383.8M740 304L890 386.5M740 306.7L890 389.2M740 309.4L890 391.9M740 312.1L890 394.6M740 314.8L890 397.3M740 317.5L890 400M740 320.2L890 402.7M740 322.9L890 405.4M740 325.6L890 408.1M740 328.3L890 410.8M740 331L890 413.5M740 333.7L890 416.2M740 336.4L890 418.9M740 339.1L890 421.6M740 341.8L890 424.3M740 344.5L890 427M740 347.2L890 429.7M740 349.9L890 432.4M740 352.6L890 435.1M740 355.3L890 437.8M740 358L890 440.5M740 360.7L890 443.2M740 363.4L890 445.9M740 366.1L890 448.6M740 368.8L890 451.3M740 371.5L890 454M740 374.2L890 456.7M740 376.9L890 459.4M740 379.6L890 462.1M740 382.3L890 464.8M740 385L890 467.5M740 387.7L890 470.2M740 390.4L890 472.9M740 393.1L890 475.6M740 395.8L890 478.3M740 398.5L890 481M740 401.2L890 483.7M740 403.9L890 486.4M740 406.6L890 489.1M740 409.3L890 491.8M740 412L890 494.5M740 414.7L890 497.2M740 417.4L890 499.9M740 420.1L890 502.6M740 422.8L890 505.3M740 425.5L890 508M740 428.2L890 510.7M740 430.9L890 513.4M740 433.6L890 516.1M740 436.3L890 518.8M740 439L890 521.5M740 441.7L890 524.2M740 444.4L890 526.9M740 447.1L890 529.6M740 449.8L890 532.3M740 452.5L890 535M740 455.2L890 537.7M740 457.9L890 540.4M740 460.6L890 543.1M740 463.3L890 545.8" stroke="#008a00" fill="none" clip-path="url(#cF5b)"/></g>
<path d="M778 390L880 449L935 653.3L833 597Z" fill="#e6ff00" />
<clipPath id="fc4"><path d="M778 390L880 449L935 653.3L833 597Z"/></clipPath>
<g clip-path="url(#fc4)">
<ellipse cx="873" cy="602" rx="27" ry="9" transform="rotate(43 873 602)" fill="#ffa200"/>
<path d="M904 576L915 567L933 565L946 592L952 643L935 655L922 645L910 615Z" fill="#80ff00"/>
<path d="M917 592L929 588L942 648L933 653Z" fill="#30ee30"/>
<path d="M927 630L930 630L935 651L932 651Z" fill="#20ffb0"/>
</g>
<path d="M778 390L833 597M782.9 392.8L837.9 599.7M787.7 395.6L842.7 602.4M792.6 398.4L847.6 605M797.4 401.2L852.4 607.7M802.3 404L857.3 610.4M807.1 406.9L862.1 613.1M812 409.7L867 615.8M816.9 412.5L871.9 618.4M821.7 415.3L876.7 621.1M826.6 418.1L881.6 623.8M831.4 420.9L886.4 626.5M836.3 423.7L891.3 629.2M841.1 426.5L896.1 631.9M846 429.3L901 634.5M850.9 432.1L905.9 637.2M855.7 435L910.7 639.9M860.6 437.8L915.6 642.6M865.4 440.6L920.4 645.3M870.3 443.4L925.3 647.9M875.1 446.2L930.1 650.6M880 449L935 653.3M778 390L880 449M779.2 394.5L881.2 453.4M780.4 399L882.4 457.9M781.6 403.5L883.6 462.3M782.8 408L884.8 466.8M784 412.5L886 471.2M785.2 417L887.2 475.6M786.4 421.5L888.4 480.1M787.6 426L889.6 484.5M788.8 430.5L890.8 489M790 435L892 493.4M791.2 439.5L893.2 497.9M792.3 444L894.3 502.3M793.5 448.5L895.5 506.7M794.7 453L896.7 511.2M795.9 457.5L897.9 515.6M797.1 462L899.1 520.1M798.3 466.5L900.3 524.5M799.5 471L901.5 528.9M800.7 475.5L902.7 533.4M801.9 480L903.9 537.8M803.1 484.5L905.1 542.3M804.3 489L906.3 546.7M805.5 493.5L907.5 551.1M806.7 498L908.7 555.6M807.9 502.5L909.9 560M809.1 507L911.1 564.5M810.3 511.5L912.3 568.9M811.5 516L913.5 573.4M812.7 520.5L914.7 577.8M813.9 525L915.9 582.2M815.1 529.5L917.1 586.7M816.3 534L918.3 591.1M817.5 538.5L919.5 595.6M818.7 543L920.7 600M819.8 547.5L921.8 604.4M821 552L923 608.9M822.2 556.5L924.2 613.3M823.4 561L925.4 617.8M824.6 565.5L926.6 622.2M825.8 570L927.8 626.7M827 574.5L929 631.1M828.2 579L930.2 635.5M829.4 583.5L931.4 640M830.6 588L932.6 644.4M831.8 592.5L933.8 648.9M833 597L935 653.3" stroke="#008a00" stroke-width="1" fill="none"/>
<path d="M815 217.5L915.5 183.2L978 409L880 449Z" fill="#e6ff00" />
<clipPath id="fc5"><path d="M815 217.5L915.5 183.2L978 409L880 449Z"/></clipPath>
<g clip-path="url(#fc5)">
<path d="M803 219L818 218L828 260L826 305L810 275L804 245Z" fill="#80ff00"/>
<path d="M815 224L830 214L849 205L888 193L900 189L897 197L888 209L860 221L840 225L820 226Z" fill="#ffa200"/>
</g>
<path d="M815 217.5L880 449M818.2 216.4L883.2 447.7M821.5 215.3L886.3 446.4M824.7 214.2L889.5 445.1M828 213.1L892.6 443.8M831.2 212L895.8 442.5M834.5 210.9L899 441.3M837.7 209.8L902.1 440M840.9 208.6L905.3 438.7M844.2 207.5L908.5 437.4M847.4 206.4L911.6 436.1M850.7 205.3L914.8 434.8M853.9 204.2L917.9 433.5M857.1 203.1L921.1 432.2M860.4 202L924.3 430.9M863.6 200.9L927.4 429.6M866.9 199.8L930.6 428.4M870.1 198.7L933.7 427.1M873.4 197.6L936.9 425.8M876.6 196.5L940.1 424.5M879.8 195.4L943.2 423.2M883.1 194.3L946.4 421.9M886.3 193.2L949.5 420.6M889.6 192.1L952.7 419.3M892.8 190.9L955.9 418M896 189.8L959 416.7M899.3 188.7L962.2 415.5M902.5 187.6L965.4 414.2M905.8 186.5L968.5 412.9M909 185.4L971.7 411.6M912.3 184.3L974.8 410.3M915.5 183.2L978 409M815 217.5L915.5 183.2M815.9 220.8L916.4 186.4M816.9 224.1L917.3 189.7M817.8 227.4L918.2 192.9M818.7 230.7L919.1 196.1M819.6 234L920 199.3M820.6 237.3L920.9 202.6M821.5 240.7L921.8 205.8M822.4 244L922.6 209M823.4 247.3L923.5 212.2M824.3 250.6L924.4 215.5M825.2 253.9L925.3 218.7M826.1 257.2L926.2 221.9M827.1 260.5L927.1 225.1M828 263.8L928 228.4M828.9 267.1L928.9 231.6M829.9 270.4L929.8 234.8M830.8 273.7L930.7 238M831.7 277L931.6 241.3M832.6 280.3L932.5 244.5M833.6 283.6L933.4 247.7M834.5 286.9L934.2 250.9M835.4 290.3L935.1 254.2M836.4 293.6L936 257.4M837.3 296.9L936.9 260.6M838.2 300.2L937.8 263.8M839.1 303.5L938.7 267.1M840.1 306.8L939.6 270.3M841 310.1L940.5 273.5M841.9 313.4L941.4 276.7M842.9 316.7L942.3 280M843.8 320L943.2 283.2M844.7 323.3L944.1 286.4M845.6 326.6L945 289.6M846.6 329.9L945.9 292.9M847.5 333.2L946.8 296.1M848.4 336.6L947.6 299.3M849.4 339.9L948.5 302.6M850.3 343.2L949.4 305.8M851.2 346.5L950.3 309M852.1 349.8L951.2 312.2M853.1 353.1L952.1 315.5M854 356.4L953 318.7M854.9 359.7L953.9 321.9M855.9 363L954.8 325.1M856.8 366.3L955.7 328.4M857.7 369.6L956.6 331.6M858.6 372.9L957.5 334.8M859.6 376.2L958.4 338M860.5 379.5L959.2 341.3M861.4 382.9L960.1 344.5M862.4 386.2L961 347.7M863.3 389.5L961.9 350.9M864.2 392.8L962.8 354.2M865.1 396.1L963.7 357.4M866.1 399.4L964.6 360.6M867 402.7L965.5 363.8M867.9 406L966.4 367.1M868.9 409.3L967.3 370.3M869.8 412.6L968.2 373.5M870.7 415.9L969.1 376.7M871.6 419.2L970 380M872.6 422.5L970.9 383.2M873.5 425.9L971.8 386.4M874.4 429.2L972.6 389.6M875.4 432.5L973.5 392.9M876.3 435.8L974.4 396.1M877.2 439.1L975.3 399.3M878.1 442.4L976.2 402.5M879.1 445.7L977.1 405.8M880 449L978 409" stroke="#008a00" stroke-width="1" fill="none"/>
<path d="M880 449L978 409L1035 613.3L935 653.3Z" fill="#e6ff00" />
<clipPath id="fc6"><path d="M880 449L978 409L1035 613.3L935 653.3Z"/></clipPath>
<g clip-path="url(#fc6)">
<ellipse cx="991" cy="607" rx="27" ry="15" transform="rotate(-45 991 607)" fill="#ffa200"/>
<path d="M904 576L915 567L933 565L946 592L952 643L935 655L922 645L910 615Z" fill="#80ff00"/>
<path d="M917 592L929 588L942 648L933 653Z" fill="#30ee30"/>
<path d="M927 630L930 630L935 651L932 651Z" fill="#20ffb0"/>
</g>
<path d="M880 449L935 653.3M885.8 446.6L940.9 650.9M891.5 444.3L946.8 648.6M897.3 441.9L952.6 646.2M903.1 439.6L958.5 643.9M908.8 437.2L964.4 641.5M914.6 434.9L970.3 639.2M920.4 432.5L976.2 636.8M926.1 430.2L982.1 634.5M931.9 427.8L987.9 632.1M937.6 425.5L993.8 629.8M943.4 423.1L999.7 627.4M949.2 420.8L1005.6 625.1M954.9 418.4L1011.5 622.7M960.7 416.1L1017.4 620.4M966.5 413.7L1023.2 618M972.2 411.4L1029.1 615.7M978 409L1035 613.3M880 449L978 409M881.8 455.8L979.9 415.8M883.7 462.6L981.8 422.6M885.5 469.4L983.7 429.4M887.3 476.2L985.6 436.2M889.2 483.1L987.5 443.1M891 489.9L989.4 449.9M892.8 496.7L991.3 456.7M894.7 503.5L993.2 463.5M896.5 510.3L995.1 470.3M898.3 517.1L997 477.1M900.2 523.9L998.9 483.9M902 530.7L1000.8 490.7M903.8 537.5L1002.7 497.5M905.7 544.3L1004.6 504.3M907.5 551.1L1006.5 511.1M909.3 558L1008.4 518M911.2 564.8L1010.3 524.8M913 571.6L1012.2 531.6M914.8 578.4L1014.1 538.4M916.7 585.2L1016 545.2M918.5 592L1017.9 552M920.3 598.8L1019.8 558.8M922.2 605.6L1021.7 565.6M924 612.4L1023.6 572.4M925.8 619.2L1025.5 579.2M927.7 626.1L1027.4 586.1M929.5 632.9L1029.3 592.9M931.3 639.7L1031.2 599.7M933.2 646.5L1033.1 606.5M935 653.3L1035 613.3" stroke="#008a00" stroke-width="1" fill="none"/>
<path d="M815 217.5L880 449L935 653.3M748 240L915.5 183.2" stroke="#008a00" fill="none"/>
</svg>
<div id="status" class="a"><div class="a t">Solved at 2017-10-01T11:38:39.33</div></div>
</body></html>
